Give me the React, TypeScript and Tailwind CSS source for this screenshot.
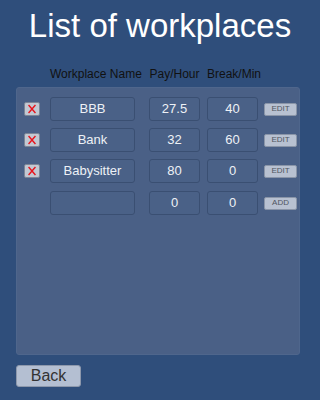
import React from "react";

const rows = [
  { name: "BBB", pay: "27.5", brk: "40", action: "EDIT", del: true },
  { name: "Bank", pay: "32", brk: "60", action: "EDIT", del: true },
  { name: "Babysitter", pay: "80", brk: "0", action: "EDIT", del: true },
  { name: "", pay: "0", brk: "0", action: "ADD", del: false },
];

const rowMargins = ["mt-[9px]", "mt-[7px]", "mt-[7px]", "mt-[8px]"];

function XBox() {
  return (
    <div className="w-[16px] h-[14px] rounded-[2px] border border-[#7d8697] bg-[#c2c8d2] flex items-center justify-center">
      <svg width="10" height="10" viewBox="0 0 10 10">
        <path d="M2 1.5 L8 8.5 M8 1.5 L2 8.5" stroke="#e8141c" strokeWidth="1.4" strokeLinecap="square" />
      </svg>
    </div>
  );
}

function Field({ value, w }: { value: string; w: string }) {
  return (
    <div
      className={`${w} h-[24px] rounded-[3px] border border-[#3a4f72] bg-[#4a6187] flex items-center justify-center text-[13px] text-[#eef1f6]`}
    >
      {value}
    </div>
  );
}

export default function App() {
  return (
    <div
      className="w-[320px] h-[400px] bg-[#2f4e7b] flex flex-col overflow-hidden"
      style={{ fontFamily: '"Liberation Sans", Arial, sans-serif' }}
    >
      <div className="pt-[6px] h-[46px] text-[33px] leading-[40px] text-white text-center">
        List of workplaces
      </div>
      <div className="mt-[20px] h-[16px] flex pl-[24px] text-[12px] leading-[16px] text-[#111]">
        <div className="w-[16px]" />
        <div className="ml-[10px] w-[85px] text-center whitespace-nowrap">Workplace Name</div>
        <div className="ml-[14px] w-[51px] text-center whitespace-nowrap">Pay/Hour</div>
        <div className="ml-[7px] w-[51px] text-center whitespace-nowrap">Break/Min</div>
      </div>
      <div className="mt-[5px] mx-[16px] w-[284px] h-[268px] rounded-[3px] bg-[#4a6086] border border-[#4f668c] flex flex-col pl-[7px]">
        {rows.map((r, i) => (
          <div key={i} className={`${rowMargins[i]} h-[24px] flex items-center`}>
            <div className="w-[16px] flex items-center">{r.del ? <XBox /> : null}</div>
            <div className="ml-[10px]">
              <Field value={r.name} w="w-[85px]" />
            </div>
            <div className="ml-[14px]">
              <Field value={r.pay} w="w-[51px]" />
            </div>
            <div className="ml-[7px]">
              <Field value={r.brk} w="w-[51px]" />
            </div>
            <div className="ml-[6px] w-[33px] h-[13px] rounded-[2px] border border-[#8a95a8] bg-[#b8c1d1] flex items-center justify-center text-[8px] leading-none text-[#4f5560]">
              {r.action}
            </div>
          </div>
        ))}
      </div>
      <div className="mt-[10px] ml-[16px] w-[65px] h-[22px] rounded-[3px] border border-[#8d98ac] bg-[#b4bfd2] flex items-center justify-center text-[16px] text-[#333]">
        Back
      </div>
    </div>
  );
}
